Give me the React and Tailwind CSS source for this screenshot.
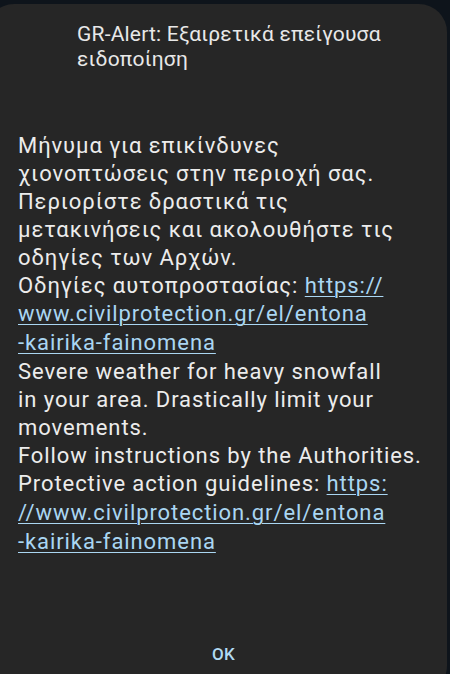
import React from 'react';

const greekLines = [
  'Μήνυμα για επικίνδυνες',
  'χιονοπτώσεις στην περιοχή σας.',
  'Περιορίστε δραστικά τις',
  'μετακινήσεις και ακολουθήστε τις',
  'οδηγίες των Αρχών.',
];

const englishLines = [
  'Severe weather for heavy snowfall',
  'in your area. Drastically limit your',
  'movements.',
  'Follow instructions by the Authorities.',
];

const Link = ({ children }) => (
  <span className="text-[#aad6f2] underline decoration-1 underline-offset-[3px]">{children}</span>
);

const App = () => {
  return (
    <div
      className="w-[450px] h-[674px] overflow-hidden bg-[#0e141b] pt-[4px]"
      style={{ fontFamily: 'Roboto, "Noto Sans", sans-serif' }}
    >
      <div className="ml-[-14px] w-[461px] h-[690px] bg-[#262626] rounded-[28px] flex flex-col">
        {/* Title */}
        <div className="pl-[91px] pt-[18px] text-[21px] leading-[25px] tracking-[0.2px] text-[#e8e8e8]">
          <div>GR-Alert: Εξαιρετικά επείγουσα</div>
          <div>ειδοποίηση</div>
        </div>

        {/* Body */}
        <div className="pl-[32px] pt-[60px] text-[22px] leading-[27.9px] tracking-[0.92px] text-[#ececec] whitespace-nowrap">
          {greekLines.map((l) => (
            <div key={l}>{l}</div>
          ))}
          <div>
            Οδηγίες αυτοπροστασίας: <Link>https://</Link>
          </div>
          <div className="leading-[29px]">
            <Link>www.civilprotection.gr/el/entona</Link>
          </div>
          <div className="leading-[30px]">
            <Link>-kairika-fainomena</Link>
          </div>
          {englishLines.map((l) => (
            <div key={l}>{l}</div>
          ))}
          <div>
            Protective action guidelines: <Link>https:</Link>
          </div>
          <div className="leading-[29px]">
            <Link>//www.civilprotection.gr/el/entona</Link>
          </div>
          <div className="leading-[30px]">
            <Link>-kairika-fainomena</Link>
          </div>
        </div>

        {/* Action */}
        <div className="flex-1" />
        <div className="pb-[27px] flex justify-center pl-[14px]">
          <button className="text-[17px] font-medium text-[#b2daf2] tracking-[0.3px]">OK</button>
        </div>
      </div>
    </div>
  );
};

export default App;
